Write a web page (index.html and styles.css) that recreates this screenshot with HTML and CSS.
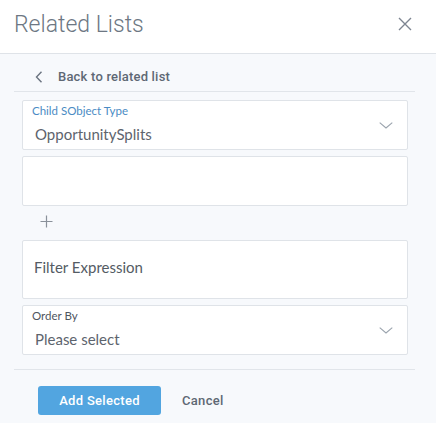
FILE: index.html
```html
<!DOCTYPE html>
<html>
<head>
<meta charset="utf-8">
<link rel="stylesheet" href="styles.css">
</head>
<body>
<div class="panel">
  <div class="header">
    <div class="title">Related Lists</div>
    <svg class="close" width="14" height="14" viewBox="0 0 14 14"><path d="M1 1L13 13M13 1L1 13" stroke="#7d8591" stroke-width="1.4" fill="none"/></svg>
  </div>
  <div class="body">
    <div class="back">
      <svg class="back-icon" width="8" height="12" viewBox="0 0 8 12"><path d="M6.5 0.8L1.5 6L6.5 11.2" stroke="#6b7480" stroke-width="1.4" fill="none"/></svg>
      <span class="back-text">Back to related list</span>
    </div>
    <div class="fields">
      <div class="field select">
        <div class="field-main">
          <div class="label label-blue">Child SObject Type</div>
          <div class="value">OpportunitySplits</div>
        </div>
        <svg class="chev" width="14" height="7" viewBox="0 0 14 7"><path d="M0.7 0.7L7 6L13.3 0.7" stroke="#9aa3ad" stroke-width="1.1" fill="none"/></svg>
      </div>
      <div class="field empty"></div>
      <div class="plus-row">
        <svg class="plus" width="13" height="13" viewBox="0 0 13 13"><path d="M6.5 0.5V12.5M0.5 6.5H12.5" stroke="#8a919a" stroke-width="1.2" fill="none"/></svg>
      </div>
      <div class="field filter">
        <div class="value">Filter Expression</div>
      </div>
      <div class="field select order">
        <div class="field-main">
          <div class="label">Order By</div>
          <div class="value">Please select</div>
        </div>
        <svg class="chev" width="14" height="7" viewBox="0 0 14 7"><path d="M0.7 0.7L7 6L13.3 0.7" stroke="#9aa3ad" stroke-width="1.1" fill="none"/></svg>
      </div>
    </div>
    <div class="footer">
      <button class="btn-primary">Add Selected</button>
      <button class="btn-link">Cancel</button>
    </div>
  </div>
</div>
</body>
</html>
```
FILE: styles.css
```css
html, body {
  margin: 0;
  padding: 0;
}
body {
  background: #f7f9fc;
  width: 436px;
  height: 423px;
  overflow: hidden;
}
.panel {
  display: flex;
  flex-direction: column;
}
.header {
  height: 53px;
  background: #ffffff;
  border-bottom: 1px solid #dfe3e8;
  display: flex;
  align-items: center;
  justify-content: space-between;
  padding: 0 24px 0 14px;
}
.title {
  font-family: Roboto, "Liberation Sans", sans-serif;
  font-weight: 300;
  font-size: 23px;
  color: #6d7783;
  margin-top: -5px;
}
.close {
  display: block;
  margin-top: -5px;
}
.body {
  padding: 0 21px 0 14px;
}
.back {
  height: 37px;
  border-bottom: 1px solid #e1e5ea;
  display: flex;
  align-items: center;
  padding-left: 21px;
}
.back-icon {
  display: block;
  margin-right: 15px;
  margin-top: 8px;
}
.back-text {
  font-family: Roboto, "Liberation Sans", sans-serif;
  font-weight: 500;
  font-size: 13px;
  color: #5e6874;
  letter-spacing: 0.2px;
  margin-top: 8px;
}
.fields {
  display: flex;
  flex-direction: column;
  padding: 8px 7px 0 8px;
  gap: 6px;
}
.field {
  background: #ffffff;
  border: 1px solid #dfe3e8;
  border-radius: 2px;
  box-sizing: border-box;
}
.select {
  height: 50px;
  display: flex;
  align-items: center;
  padding: 0 14px 0 9px;
}
.field-main {
  flex: 1;
}
.label {
  font-family: Lato, "Open Sans", sans-serif;
  font-size: 11.5px;
  color: #4f5660;
  line-height: 14px;
  margin-top: -2px;
}
.label-blue {
  color: #4a8bc4;
}
.value {
  font-family: Lato, "Open Sans", sans-serif;
  font-size: 15px;
  color: #5d646d;
  line-height: 20px;
  margin-top: 6px;
  padding-left: 3px;
}
.chev {
  display: block;
}
.empty {
  height: 50px;
}
.plus-row {
  height: 22px;
  display: flex;
  align-items: center;
  padding-left: 18px;
}
.plus {
  display: block;
  margin-top: -4px;
}
.filter {
  height: 59px;
  display: flex;
  align-items: center;
  padding: 0 0 6px 9px;
}
.filter .value {
  margin-top: 0;
  padding-left: 2px;
  color: #545b64;
}
.footer {
  margin-top: 14px;
  border-top: 1px solid #e1e5ea;
  padding: 16px 0 0 24px;
  display: flex;
  align-items: center;
}
.btn-primary {
  height: 29px;
  width: 123px;
  background: #52a5e0;
  color: #ffffff;
  border: none;
  border-radius: 3px;
  font-family: Roboto, "Liberation Sans", sans-serif;
  font-weight: 500;
  font-size: 13px;
  letter-spacing: 0.3px;
  padding: 0;
}
.btn-link {
  background: none;
  border: none;
  margin-left: 21px;
  padding: 0;
  font-family: Roboto, "Liberation Sans", sans-serif;
  font-weight: 500;
  font-size: 13px;
  color: #5e6874;
  letter-spacing: 0.3px;
}
```
